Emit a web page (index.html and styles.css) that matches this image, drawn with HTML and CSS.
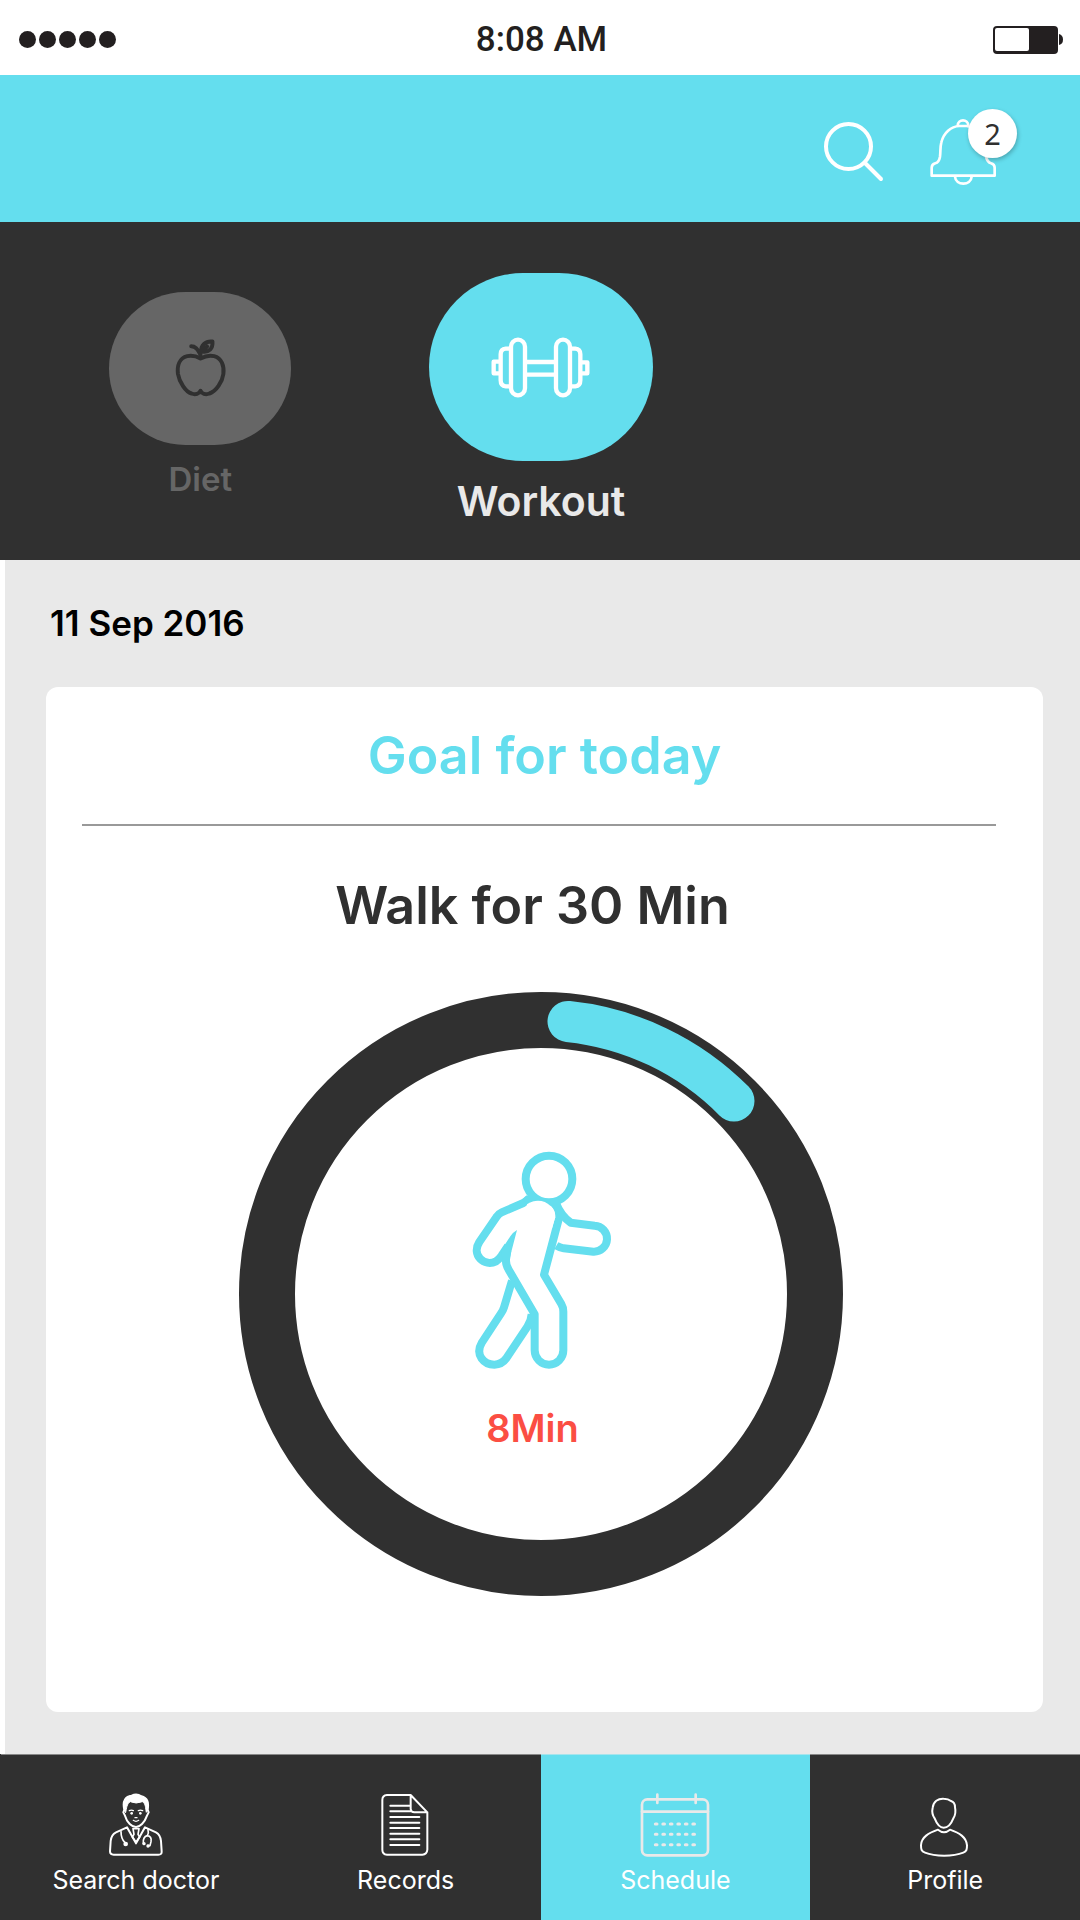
FILE: index.html
```html
<!DOCTYPE html>
<html lang="en">
<head>
<meta charset="utf-8">
<meta name="viewport" content="width=device-width, initial-scale=1">
<title>Workout schedule</title>
<link rel="stylesheet" href="styles.css">
</head>
<body>
<div class="app">
  <div class="status">
    <div class="signal"><i></i><i></i><i></i><i></i><i></i></div>
    <time class="clock">8:08 AM</time>
    <svg class="battery" viewBox="0 0 72 30" width="72" height="30" aria-label="Battery">
      <rect x="1" y="1" width="65" height="28" rx="4" fill="#231f20"/>
      <rect x="3" y="3" width="34" height="23" rx="2" fill="#fff"/>
      <path d="M67 9q4 1 4 5.500t-4 5.500z" fill="#231f20"/>
    </svg>
  </div>

  <header class="topbar">
    <button class="icon-button" type="button" aria-label="Search">
      <svg viewBox="0 0 60 60" width="60" height="60" fill="none" stroke="#fff" stroke-width="4" stroke-linecap="round">
        <circle cx="24.500" cy="24.500" r="22.500"/><path d="M41 41L57 57"/>
      </svg>
    </button>
    <button class="icon-button" type="button" aria-label="Notifications">
      <svg viewBox="450 84 198 204" width="66" height="68" fill="none" stroke="#fff" stroke-width="8" stroke-linejoin="round">
        <path d="M533 107C533 86 565 86 565 107M455 257V233C455 225 459 222 466 220Q477 217 480 200C482 186 480 172 484 157C491 128 513 109 538 108H560C587 112 609 132 614 157C618 172 616 186 618 200Q622 217 633 220C640 222 644 225 644 233V257ZM525 260C527 288 573 288 575 260"/>
      </svg>
      <span class="badge">2</span>
    </button>
  </header>

  <div class="categories">
    <button class="category" type="button">
      <span class="pill">
        <svg viewBox="250 262 160 180" width="53" height="60" fill="none" stroke="#303030" stroke-width="12" stroke-linecap="round" stroke-linejoin="round">
          <path d="M330 323C314 314 300 314 290 316C266 322 259 346 262 370C266 394 285 424 303 429C315 434 326 429 330 421C334 429 345 434 357 429C377 423 396 394 399 370C402 346 394 322 371 316C358 313 345 315 330 323ZM330 312C324 298 314 286 302 286M333 302C330 283 345 270 366 272C368 293 356 307 333 302L350 287"/>
        </svg>
      </span>
      <span class="category-name">Diet</span>
    </button>
    <button class="category category-active" type="button" aria-pressed="true">
      <span class="pill">
        <svg viewBox="245 260 297 183" width="99" height="61" fill="none" stroke="#fff" stroke-width="13" stroke-linejoin="round">
          <rect x="305" y="268" width="42" height="167" rx="21"/>
          <rect x="440" y="268" width="42" height="167" rx="21"/>
          <path d="M302 295H289Q274 296 274 312V390Q274 407 289 408H302M484 295H498Q513 296 513 312V390Q513 407 498 408H484M351 335H436M351 373H436M274 334H253V369H274M514 336H534V369H514"/>
        </svg>
      </span>
      <span class="category-name">Workout</span>
    </button>
  </div>

  <main class="content">
    <h1 class="date">11 Sep 2016</h1>
    <section class="card">
      <h2 class="card-title">Goal for today</h2>
      <div class="goal">
        <h3 class="goal-name">Walk for 30 Min</h3>
        <div class="ring">
          <svg class="dial" viewBox="0 0 604 604" fill="none">
            <circle cx="302" cy="302" r="274" stroke="#303030" stroke-width="56"/>
            <path d="M329 29.500A273.500 273.500 0 0 1 495 109" stroke="#64deee" stroke-width="41" stroke-linecap="round"/>
          </svg>
          <div class="progress">
            <svg viewBox="56 60 435 660" width="145" height="220" fill="none" stroke="#64deee" stroke-width="24" stroke-linejoin="round">
              <path d="M240 204Q231 213 222 219L157 247Q148 251 143 259L90 336C65 375 105 412 140 394Q149 388 156 378L176 348"/>
              <path d="M228 216Q245 200 266 200C305 200 337 235 328 268L284 434L336 522Q342 532 342 545V661A43 43 0 0 1 256 661V553L178 419Q169 405 170 388L174 362"/>
              <path d="M203 300Q192 306 183 319L156 360L160 400L181 392Q182 380 184 373Z" fill="#64deee" stroke="none"/>
              <path d="M320 220Q335 258 364 278L436 287A39 39 0 0 1 432 365L343 355Q331 353 321 347"/>
              <path d="M188 452L164 532Q161 542 155 550L98 637C75 676 105 704 135 704Q158 703 170 686L234 590Q246 572 247 552"/>
              <circle cx="299" cy="147" r="70" fill="#fff"/>
              <path d="M233 223Q248 212 266 212C295 212 318 235 318 262L308 295H225Z" fill="#fff" stroke="none"/>
            </svg>
            <p class="elapsed">8Min</p>
          </div>
        </div>
      </div>
    </section>
  </main>

  <nav class="tabs">
    <a class="tab" href="#doctor">
      <svg viewBox="234 158 168 192" width="56" height="64" fill="none" stroke="#fff" stroke-width="6" stroke-linejoin="round" stroke-linecap="round">
        <path d="M283 208C276 180 288 168 305 166Q320 158 334 168C352 173 357 184 353 208L356 216L351 226C344 247 329 260 318 260C306 260 291 247 285 226L280 216Z"/>
        <path d="M283 208C276 180 288 168 305 166Q320 158 334 168C352 173 357 184 353 208L349 216C346 204 348 190 337 184Q318 192 301 184C290 190 290 204 287 216Z" fill="#fff" stroke-width="3"/>
        <path d="M298 211Q304 208 310 211M325 211Q331 208 338 211M310 240Q318 246 326 240M315 232H321" stroke-width="4"/>
        <circle cx="305" cy="219" r="4" fill="#fff" stroke="none"/><circle cx="331" cy="219" r="4" fill="#fff" stroke="none"/>
        <path d="M291 261L258 276Q244 283 242 302L240 333Q240 343 251 343H385Q396 343 395 333L393 302Q391 283 378 276L345 261L318 309Z"/>
        <path d="M309 265H327L324 282L329 290L318 305L307 290L312 282ZM273 274Q273 295 285 307M354 268Q357 278 352 286Q338 290 340 309M352 286Q366 288 363 304L360 316H353" stroke-width="5"/>
        <circle cx="287" cy="311" r="7" fill="#fff" stroke="none"/><circle cx="342" cy="310" r="5" fill="#fff" stroke="none"/><circle cx="354" cy="317" r="5" fill="#fff" stroke="none"/>
      </svg>
      <span>Search doctor</span>
    </a>
    <a class="tab" href="#records">
      <svg viewBox="152 158 144 192" width="48" height="64" fill="none" stroke="#fff" stroke-width="6" stroke-linejoin="round" stroke-linecap="round" overflow="visible">
        <path d="M238 164H167Q153 165 153 179V328Q153 342 167 343H273Q287 342 288 328V216ZM238 164V206Q239 216 249 216H288"/>
        <path d="M177 196H235M177 213H238M177 230H264M177 247H264M177 263H264M177 280H264M177 297H264M177 314H264"/>
      </svg>
      <span>Records</span>
    </a>
    <a class="tab tab-active" href="#schedule" aria-current="page">
      <svg viewBox="148 160 210 192" width="70" height="64" fill="none" stroke="#e9e9e9" stroke-width="8" stroke-linecap="round">
        <rect x="154" y="179" width="198" height="168" rx="16"/>
        <path d="M154 216H352M200 165V190M315 165V190"/>
        <path d="M194 253H313M194 284H313M194 315H313" stroke-width="9" stroke-dasharray="5 17.500"/>
      </svg>
      <span>Schedule</span>
    </a>
    <a class="tab" href="#profile">
      <svg viewBox="240 162 150 192" width="50" height="64" fill="none" stroke="#fff" stroke-width="6" stroke-linejoin="round">
        <path d="M311 179C294 178 280 188 278 206C275 219 277 228 284 238C291 256 301 266 311 266C322 266 333 256 340 238C347 228 348 219 345 205Q345 189 333 186Q325 179 311 179Z"/>
        <path d="M294 272C266 282 244 294 243 319C243 331 244 337 255 341C285 353 340 353 370 341C380 337 381 331 381 319C379 294 358 282 330 272Q312 287 294 272Z"/>
      </svg>
      <span>Profile</span>
    </a>
  </nav>
</div>
</body>
</html>
```

FILE: styles.css
```css
* {
  box-sizing: border-box;
}

body {
  margin: 0;
  font-family: Inter, "Liberation Sans", sans-serif;
  color: #303030;
  background: #fff;
}

h1, h2, h3, p {
  margin: 0;
  font-weight: 600;
}

button {
  padding: 0;
  border: 0;
  background: none;
  font: inherit;
  color: inherit;
}

svg {
  display: block;
}

.app {
  display: flex;
  flex-direction: column;
  min-height: 100vh;
}

/* Status bar */
.status {
  display: grid;
  grid-template-columns: 1fr auto 1fr;
  align-items: center;
  padding: 4px 16px 0 19px;
  height: 75px;
  color: #231f20;
}

.signal {
  display: flex;
  gap: 3px;
}

.signal i {
  width: 17px;
  height: 17px;
  border-radius: 50%;
  background: #231f20;
}

.clock {
  font-family: Roboto, "Liberation Sans", sans-serif;
  font-size: 35px;
  font-weight: 500;
  line-height: 40px;
}

.battery {
  justify-self: end;
}

/* Header */
.topbar {
  display: flex;
  justify-content: flex-end;
  align-items: center;
  gap: 46px;
  height: 147px;
  padding: 6px 84px 0 0;
  background: #64deee;
}

.icon-button {
  position: relative;
}

.badge {
  position: absolute;
  top: -9px;
  right: -21px;
  width: 49px;
  height: 49px;
  border-radius: 50%;
  background: #fff;
  box-shadow: 1px 2px 4px rgba(0, 0, 0, 0.25);
  font-family: "Noto Sans", sans-serif;
  font-size: 29px;
  line-height: 49px;
  text-align: center;
}

/* Category picker */
.categories {
  display: grid;
  grid-template-columns: repeat(3, 1fr);
  align-items: center;
  padding: 12px 28px 0 30px;
  height: 338px;
  background: #303030;
}

.category {
  display: flex;
  flex-direction: column;
  align-items: center;
  gap: 10px;
  color: #666;
  font-size: 33px;
  font-weight: 600;
  line-height: 48px;
}

.pill {
  display: grid;
  place-items: center;
  width: 182px;
  height: 153px;
  border-radius: 77px;
  background: #666;
}

.category-active {
  gap: 20px;
  color: #e9e9e9;
  font-size: 41px;
  line-height: 40px;
}

.category-active .pill {
  width: 224px;
  height: 188px;
  border-radius: 94px;
  background: #64deee;
}

/* Goal */
.content {
  flex: 1;
  padding: 43px 37px 42px 41px;
  border-left: 5px solid #fff;
  background: #e9e9e9;
}

.date {
  padding-left: 4px;
  margin-bottom: 44px;
  color: #000;
  font-size: 35px;
  line-height: 40px;
}

.card {
  padding: 0 47px 116px 36px;
  border-radius: 12px;
  background: #fff;
}

.card-title {
  padding-left: 11px;
  border-bottom: 2px solid #999;
  color: #64deee;
  font-size: 52px;
  line-height: 137px;
  text-align: center;
}

.goal {
  display: flex;
  flex-direction: column;
  align-items: center;
  padding-left: 3px;
}

.goal-name,
.elapsed {
  padding-right: 16px;
}

.goal-name {
  margin: 48px 0 54px;
  font-size: 52px;
  line-height: 64px;
}

.ring {
  display: grid;
  width: 604px;
  max-width: 100%;
}

.dial,
.progress {
  grid-area: 1 / 1;
}

.progress {
  display: flex;
  flex-direction: column;
  align-items: center;
  gap: 34px;
  padding-top: 158px;
}

.elapsed {
  color: #fb4e43;
  font-size: 38px;
  line-height: 48px;
}

/* Bottom navigation */
.tabs {
  display: grid;
  grid-template-columns: repeat(4, 1fr);
  padding-left: 1px;
  background: #303030;
}

.tab {
  display: flex;
  flex-direction: column;
  align-items: center;
  gap: 8px;
  padding: 38px 0 24px;
  border-top: 1px solid #888;
  color: #fff;
  font-size: 25px;
  line-height: 31px;
  text-decoration: none;
}

.tab-active {
  border-color: #a6e4ec;
  background: #64deee;
}
```
